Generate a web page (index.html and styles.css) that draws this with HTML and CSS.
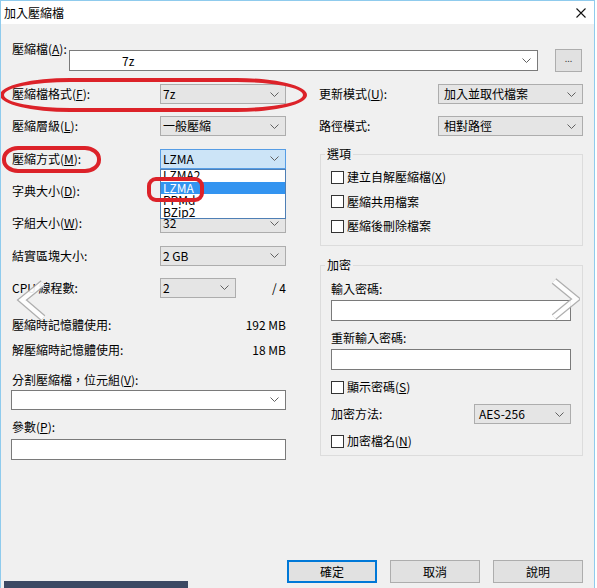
FILE: index.html
```html
<!DOCTYPE html>
<html lang="zh-Hant">
<head>
    <meta charset="UTF-8">
    <title>加入壓縮檔</title>
    <link rel="stylesheet" href="styles.css">
</head>
<body>
<div class="dialog">
    <div class="titlebar">
        <span class="title">加入壓縮檔</span>
        <svg class="close" width="10" height="10" viewBox="0 0 10 10"><path d="M0.5 0.5L9.5 9.5M9.5 0.5L0.5 9.5" stroke="#111" stroke-width="1.1" fill="none"/></svg>
    </div>
    <div class="content">
        <div class="archive-row">
            <span class="archive-label">壓縮檔(<u>A</u>):</span>
            <div class="combo edit archive-combo"><span>7z</span><svg class="chev" width="9" height="5" viewBox="0 0 9 5"><path d="M0.5 0.5L4.5 4.5L8.5 0.5" fill="none" stroke="#606060"/></svg></div>
            <div class="btn-browse">...</div>
        </div>

        <div class="columns">
            <div class="col-left">
                <div class="field"><span class="lbl">壓縮檔格式(<u>F</u>):</span><div class="combo"><span>7z</span><svg class="chev" width="9" height="5" viewBox="0 0 9 5"><path d="M0.5 0.5L4.5 4.5L8.5 0.5" fill="none" stroke="#606060"/></svg></div></div>
                <div class="field"><span class="lbl">壓縮層級(<u>L</u>):</span><div class="combo"><span>一般壓縮</span><svg class="chev" width="9" height="5" viewBox="0 0 9 5"><path d="M0.5 0.5L4.5 4.5L8.5 0.5" fill="none" stroke="#606060"/></svg></div></div>
                <div class="field"><span class="lbl">壓縮方式(<u>M</u>):</span><div class="combo focus"><span>LZMA</span><svg class="chev" width="9" height="5" viewBox="0 0 9 5"><path d="M0.5 0.5L4.5 4.5L8.5 0.5" fill="none" stroke="#606060"/></svg></div></div>
                <div class="field"><span class="lbl">字典大小(<u>D</u>):</span><div class="combo"><span>192 MB</span><svg class="chev" width="9" height="5" viewBox="0 0 9 5"><path d="M0.5 0.5L4.5 4.5L8.5 0.5" fill="none" stroke="#606060"/></svg></div></div>
                <div class="field"><span class="lbl">字組大小(<u>W</u>):</span><div class="combo"><span>32</span><svg class="chev" width="9" height="5" viewBox="0 0 9 5"><path d="M0.5 0.5L4.5 4.5L8.5 0.5" fill="none" stroke="#606060"/></svg></div></div>
                <div class="field"><span class="lbl">結實區塊大小:</span><div class="combo"><span>2 GB</span><svg class="chev" width="9" height="5" viewBox="0 0 9 5"><path d="M0.5 0.5L4.5 4.5L8.5 0.5" fill="none" stroke="#606060"/></svg></div></div>
                <div class="field"><span class="lbl">CPU 線程數:</span><div class="combo small"><span>2</span><svg class="chev" width="9" height="5" viewBox="0 0 9 5"><path d="M0.5 0.5L4.5 4.5L8.5 0.5" fill="none" stroke="#606060"/></svg></div><span class="of">/ 4</span></div>

                <div class="mem first"><span>壓縮時記憶體使用:</span><span>192 MB</span></div>
                <div class="mem"><span>解壓縮時記憶體使用:</span><span>18 MB</span></div>

                <div class="caption split">分割壓縮檔，位元組(<u>V</u>):</div>
                <div class="combo edit wide"><span></span><svg class="chev" width="9" height="5" viewBox="0 0 9 5"><path d="M0.5 0.5L4.5 4.5L8.5 0.5" fill="none" stroke="#606060"/></svg></div>
                <div class="caption params">參數(<u>P</u>):</div>
                <div class="textbox"></div>
            </div>

            <div class="col-right">
                <div class="field"><span class="lbl">更新模式(<u>U</u>):</span><div class="combo right"><span>加入並取代檔案</span><svg class="chev" width="9" height="5" viewBox="0 0 9 5"><path d="M0.5 0.5L4.5 4.5L8.5 0.5" fill="none" stroke="#606060"/></svg></div></div>
                <div class="field second"><span class="lbl">路徑模式:</span><div class="combo right"><span>相對路徑</span><svg class="chev" width="9" height="5" viewBox="0 0 9 5"><path d="M0.5 0.5L4.5 4.5L8.5 0.5" fill="none" stroke="#606060"/></svg></div></div>

                <fieldset class="group options">
                    <legend>選項</legend>
                    <div class="check"><span class="box"></span>建立自解壓縮檔(<u>X</u>)</div>
                    <div class="check"><span class="box"></span>壓縮共用檔案</div>
                    <div class="check"><span class="box"></span>壓縮後刪除檔案</div>
                </fieldset>

                <fieldset class="group encrypt">
                    <legend>加密</legend>
                    <div class="caption pw1">輸入密碼:</div>
                    <div class="textbox pw"></div>
                    <div class="caption pw2">重新輸入密碼:</div>
                    <div class="textbox pw"></div>
                    <div class="check show"><span class="box"></span>顯示密碼(<u>S</u>)</div>
                    <div class="field method"><span class="lbl">加密方法:</span><div class="combo aes"><span>AES-256</span><svg class="chev" width="9" height="5" viewBox="0 0 9 5"><path d="M0.5 0.5L4.5 4.5L8.5 0.5" fill="none" stroke="#606060"/></svg></div></div>
                    <div class="check names"><span class="box"></span>加密檔名(<u>N</u>)</div>
                </fieldset>
            </div>
        </div>

        <div class="buttons">
            <div class="btn default">確定</div>
            <div class="btn">取消</div>
            <div class="btn">說明</div>
        </div>
    </div>

    <!-- open list of the method combo -->
    <div class="droplist">
        <div class="opt first">LZMA2</div>
        <div class="opt sel">LZMA</div>
        <div class="opt">PPMd</div>
        <div class="opt">BZip2</div>
    </div>

    <!-- red marks drawn on the screenshot -->
    <div class="mark mark-format"></div>
    <div class="mark mark-method"></div>
    <div class="mark mark-lzma"></div>

    <!-- viewer arrows -->
    <svg class="nav nav-prev" width="32" height="44" viewBox="0 0 32 44"><path d="M27 5L6 22L27 40" fill="none" stroke="#a8a8a8" stroke-width="7"/><path d="M27 5L6 22L27 40" fill="none" stroke="#fff" stroke-width="4.5"/></svg>
    <svg class="nav nav-next" width="32" height="44" viewBox="0 0 32 44"><path d="M6 3L28 21L6 39" fill="none" stroke="#a8a8a8" stroke-width="7"/><path d="M6 3L28 21L6 39" fill="none" stroke="#fff" stroke-width="4.5"/></svg>

    <div class="taskbar"></div>
</div>
</body>
</html>
```

FILE: styles.css
```css
body{
    margin: 0;
    background: #fff;
    font-family: "Noto Sans CJK TC", "Noto Sans", sans-serif;
    font-size: 12px;
    color: #000;
}
u{
    text-decoration: underline;
    text-underline-offset: 1px;
}
.dialog{
    position: relative;
    width: 593px;
    height: 587px;
    border: 1px solid #8fcbed;
    border-bottom: none;
    background: #f0f0f0;
    display: flex;
    flex-direction: column;
    overflow: hidden;
}
.titlebar{
    height: 23px;
    background: #fff;
    display: flex;
    align-items: center;
    justify-content: space-between;
    padding: 0 8px 0 3px;
    line-height: 14px;
}
.content{
    flex: 1;
    display: flex;
    flex-direction: column;
    padding: 18px 11px 5px 11px;
    line-height: 14px;
}

/* combos */
.combo{
    display: flex;
    align-items: center;
    justify-content: space-between;
    box-sizing: border-box;
    width: 126px;
    height: 20px;
    padding: 0 6px 0 2px;
    border: 1px solid #adadad;
    background: #e5e5e5;
    white-space: nowrap;
    flex: none;
}
.combo.edit{
    background: #fff;
    border-color: #7a7a7a;
}
.combo.focus{
    background: #cce4f7;
    border-color: #569de5;
}
.combo.small{
    width: 76px;
}
.combo.right{
    width: 145px;
    padding-left: 5px;
}
.combo.wide{
    width: 275px;
    margin: 3px 0 0 -1px;
}
.combo.aes{
    width: 97px;
    padding-left: 4px;
}
.chev{
    flex: none;
}

/* archive name */
.archive-row{
    display: flex;
    align-items: flex-start;
    height: 30px;
}
.archive-label{
    width: 57px;
    flex: none;
}
.combo.archive-combo{
    width: 469px;
    height: 21px;
    margin-top: 8px;
    padding-left: 52px;
}
.btn-browse{
    flex: none;
    width: 27px;
    height: 23px;
    margin: 7px 0 0 17px;
    box-sizing: border-box;
    border: 1px solid #adadad;
    background: #e1e1e1;
    color: #444;
    font-size: 9px;
    text-align: center;
    line-height: 18px;
}

.columns{
    display: flex;
    justify-content: space-between;
    margin-top: 12px;
}
.col-left{
    width: 274px;
    display: flex;
    flex-direction: column;
}
.col-right{
    width: 264px;
    display: flex;
    flex-direction: column;
}
.field{
    display: flex;
    align-items: center;
    justify-content: space-between;
    height: 20px;
}
.col-left .field + .field{
    margin-top: 12.33px;
}
.field .of{
    margin-left: auto;
}
.col-left .field .lbl{
    width: 148px;
    flex: none;
}
.mem{
    display: flex;
    justify-content: space-between;
    margin-top: 11px;
}
.mem.first{
    margin-top: 20px;
}
.caption.split{
    margin-top: 16px;
}
.caption.params{
    margin-top: 10px;
}
.textbox{
    height: 21px;
    box-sizing: border-box;
    border: 1px solid #7a7a7a;
    background: #fff;
    margin: 5px 0 0 -1px;
    width: 275px;
}

/* right side */
.col-right .field.second{
    margin-top: 12px;
}
.group{
    margin: 11px 0 0 1px;
    padding: 0 11px 12px 10px;
    border: 1px solid #dcdcdc;
    min-width: 0;
}
.group.encrypt{
    margin-top: 12px;
    padding-bottom: 7px;
}
.group legend{
    padding: 0 2px;
    margin-left: -6px;
    line-height: 14px;
}
.check{
    display: flex;
    align-items: center;
    height: 14px;
    margin-top: 10.5px;
}
.options .check:first-of-type{
    margin-top: 9px;
}
.box{
    width: 13px;
    height: 13px;
    box-sizing: border-box;
    border: 1px solid #333;
    background: #fff;
    margin-right: 3px;
}
.caption.pw1, .caption.pw2{
    margin-top: 10px;
}
.textbox.pw{
    width: 240px;
    margin: 4px 0 0 0;
}
.check.show, .check.names{
    margin-top: 10px;
}
.field.method{
    margin-top: 10px;
}

/* bottom buttons */
.buttons{
    margin-top: auto;
    display: flex;
    justify-content: flex-end;
    gap: 13px;
}
.btn{
    width: 90px;
    height: 23px;
    box-sizing: border-box;
    border: 1px solid #adadad;
    background: #e1e1e1;
    text-align: center;
    line-height: 21px;
}
.btn.default{
    border-color: #0078d7;
    box-shadow: inset 0 0 0 1px #0078d7;
}

/* overlays */
.droplist{
    position: absolute;
    left: 159px;
    top: 168px;
    width: 126px;
    height: 50px;
    box-sizing: border-box;
    border: 1px solid #4f7fb5;
    background: #fff;
    overflow: hidden;
    line-height: 12px;
}
.opt{
    height: 12px;
    padding-left: 2px;
    white-space: nowrap;
}
.opt.first{
    line-height: 9px;
    overflow: hidden;
}
.opt.sel{
    background: #3394f0;
    color: #fff;
}
.mark{
    position: absolute;
    box-sizing: border-box;
    border: 4px solid #dc2229;
}
.mark-format{
    left: -1px;
    top: 77px;
    width: 307px;
    height: 34px;
    border-radius: 70px / 17px;
}
.mark-method{
    left: 1px;
    top: 145px;
    width: 99px;
    height: 27px;
    border-radius: 16px / 13px;
}
.mark-lzma{
    left: 146px;
    top: 176px;
    width: 57px;
    height: 25px;
    border-radius: 9px;
}
.nav{
    position: absolute;
    opacity: .9;
}
.nav-prev{
    left: 15px;
    top: 277px;
}
.nav-next{
    left: 547px;
    top: 277px;
}
.taskbar{
    position: absolute;
    left: 3px;
    top: 580px;
    width: 184px;
    height: 8px;
    background: #3c4963;
}
```
